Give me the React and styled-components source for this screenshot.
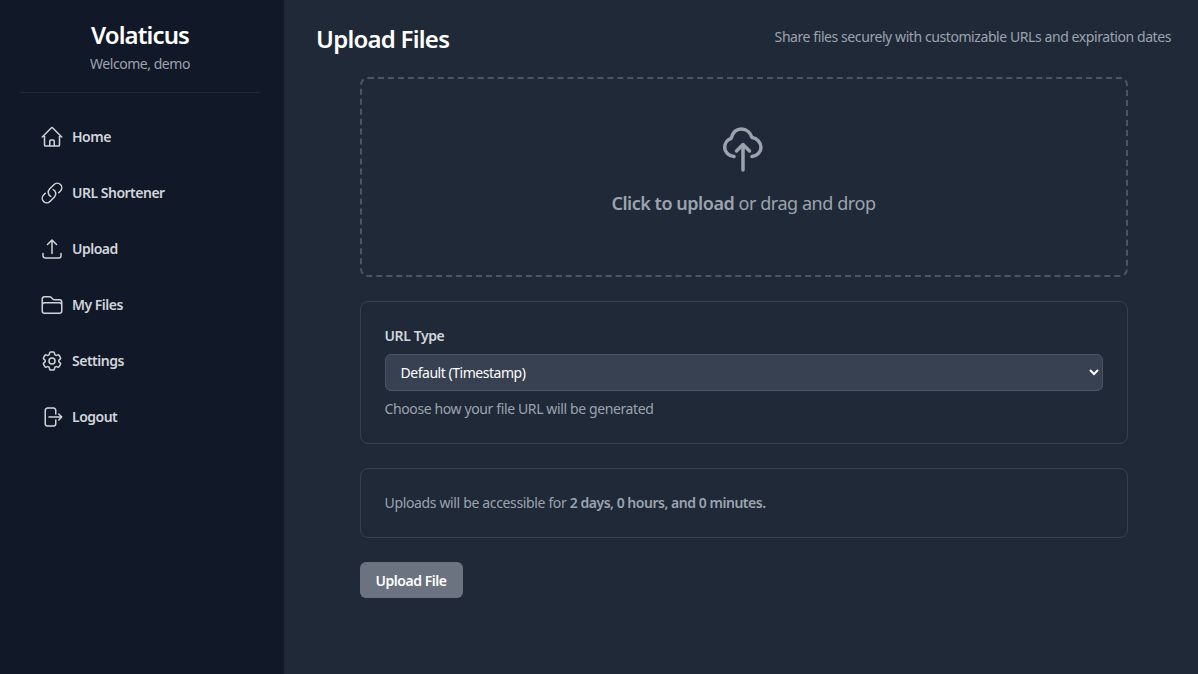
import React from "react"
import styled, { createGlobalStyle } from "styled-components"
import {
  HiOutlineHome,
  HiOutlineLink,
  HiOutlineArrowUpTray,
  HiOutlineFolder,
  HiOutlineCog6Tooth,
  HiOutlineArrowRightOnRectangle,
} from "react-icons/hi2"

const GlobalStyle = createGlobalStyle`
  * { box-sizing: border-box; }
  html, body { margin: 0; height: 100%; }
  body {
    background: #1f2937;
    font-family: "Noto Sans", "Open Sans", sans-serif;
  }
`

const NAV_ITEMS = [
  { label: "Home", Icon: HiOutlineHome },
  { label: "URL Shortener", Icon: HiOutlineLink },
  { label: "Upload", Icon: HiOutlineArrowUpTray },
  { label: "My Files", Icon: HiOutlineFolder },
  { label: "Settings", Icon: HiOutlineCog6Tooth },
  { label: "Logout", Icon: HiOutlineArrowRightOnRectangle },
]

const CloudIcon = () => (
  <svg width="48" height="48" viewBox="0 0 48 48" fill="none" stroke="currentColor" strokeWidth="3.5" strokeLinecap="round" strokeLinejoin="round">
    <path d="M14 31.500C8.500 31 4.700 27 4.700 22.500C4.700 18 7.500 14.500 11 13.500C12.500 8 16 4 21.500 4C26.500 4 30.500 8 32 12.500C37 13 41 17.500 41 22.500C41 27 37 31 32 31.500" />
    <path d="M23 45V19.500M16.500 26L23 19.500L29.500 26" />
  </svg>
)

const App = () => (
  <Layout>
    <GlobalStyle />
    <Sidebar>
      <Brand>
        <BrandName>Volaticus</BrandName>
        <Welcome>Welcome, demo</Welcome>
      </Brand>
      <Nav>
        {NAV_ITEMS.map(({ label, Icon }) => (
          <NavItem href="#" key={label}>
            <Icon size={24} />
            {label}
          </NavItem>
        ))}
      </Nav>
    </Sidebar>
    <Main>
      <Header>
        <Title>Upload Files</Title>
        <Subtitle>Share files securely with customizable URLs and expiration dates</Subtitle>
      </Header>
      <Content>
        <DropZone>
          <CloudIcon />
          <DropText>
            <strong>Click to upload</strong> or drag and drop
          </DropText>
        </DropZone>
        <Card>
          <FieldLabel htmlFor="url-type">URL Type</FieldLabel>
          <Select id="url-type" defaultValue="default">
            <option value="default">Default (Timestamp)</option>
          </Select>
          <Hint>Choose how your file URL will be generated</Hint>
        </Card>
        <Card>
          <Notice>
            Uploads will be accessible for <strong>2 days, 0 hours, and 0 minutes.</strong>
          </Notice>
        </Card>
        <UploadButton type="button">Upload File</UploadButton>
      </Content>
    </Main>
  </Layout>
)

const Layout = styled.div`
  display: flex;
  min-height: 674px;
`

const Sidebar = styled.aside`
  width: 284px;
  flex-shrink: 0;
  padding: 20px 24px 20px 20px;
  background: #111827;
`

const Brand = styled.div`
  height: 73px;
  border-bottom: 1px solid #1f2937;
  text-align: center;
`

const BrandName = styled.h1`
  margin: 0;
  font-size: 24px;
  line-height: 30px;
  font-weight: 600;
  letter-spacing: -0.89px;
  color: #fff;
`

const Welcome = styled.p`
  margin: 4px 0 0;
  font-size: 14px;
  line-height: 20px;
  letter-spacing: -0.46px;
  color: #9ca3af;
`

const Nav = styled.nav`
  display: flex;
  flex-direction: column;
  margin-top: 16px;
`

const NavItem = styled.a`
  display: flex;
  align-items: center;
  gap: 8px;
  padding: 16px 20px;
  font-size: 14px;
  line-height: 24px;
  font-weight: 600;
  letter-spacing: -0.5px;
  color: #d1d5db;
  text-decoration: none;
`

const Main = styled.main`
  flex: 1;
  min-width: 0;
  padding: 21px 27px 32px 32px;
`

const Header = styled.header`
  display: flex;
  align-items: flex-start;
  justify-content: space-between;
  margin-bottom: 20px;
`

const Title = styled.h2`
  margin: 0;
  font-size: 24px;
  line-height: 36px;
  font-weight: 600;
  letter-spacing: -0.75px;
  color: #fff;
`

const Subtitle = styled.p`
  margin: 6px 0 0;
  font-size: 14px;
  line-height: 20px;
  letter-spacing: -0.42px;
  color: #9ca3af;
`

const Content = styled.div`
  display: flex;
  flex-direction: column;
  align-items: flex-start;
  gap: 24px;
  width: 768px;
  margin: 0 auto;
`

const DropZone = styled.div`
  display: flex;
  flex-direction: column;
  align-items: center;
  width: 100%;
  height: 200px;
  padding-top: 46px;
  border: 2px dashed #4b5563;
  border-radius: 8px;
  color: #9ca3af;
`

const DropText = styled.p`
  margin: 16px 0 0;
  font-size: 18px;
  line-height: 28px;
  letter-spacing: -0.44px;
  color: #9ca3af;

  strong {
    font-weight: 600;
    letter-spacing: -0.47px;
  }
`

const Card = styled.section`
  width: 100%;
  padding: 24px;
  border: 1px solid #374151;
  border-radius: 8px;
`

const FieldLabel = styled.label`
  display: block;
  margin-bottom: 8px;
  font-size: 14px;
  line-height: 20px;
  font-weight: 600;
  letter-spacing: -0.4px;
  color: #d1d5db;
`

const Select = styled.select`
  display: block;
  width: 100%;
  height: 37px;
  padding: 0 11px;
  border: 1px solid #4b5563;
  border-radius: 6px;
  background: #374151;
  font-family: inherit;
  font-size: 14px;
  letter-spacing: -0.47px;
  color: #fff;
`

const Hint = styled.p`
  margin: 8px 0 0;
  font-size: 14px;
  line-height: 20px;
  letter-spacing: -0.38px;
  color: #9ca3af;
`

const Notice = styled.p`
  margin: 0;
  font-size: 14px;
  line-height: 20px;
  letter-spacing: -0.35px;
  color: #9ca3af;

  strong {
    font-weight: 600;
    letter-spacing: -0.47px;
  }
`

const UploadButton = styled.button`
  height: 36px;
  padding: 0 16px;
  border: 0;
  border-radius: 6px;
  background: #6b7280;
  font-family: inherit;
  font-size: 14px;
  font-weight: 600;
  letter-spacing: -0.45px;
  color: #fff;
`

export default App
